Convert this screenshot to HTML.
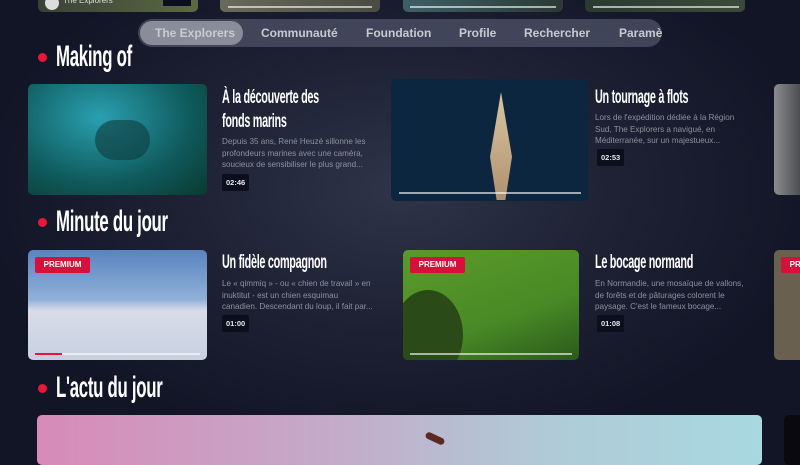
<!DOCTYPE html>
<html><head><meta charset="utf-8"><style>
*{margin:0;padding:0;box-sizing:border-box}
body{width:800px;height:450px;overflow:hidden;position:relative;font-family:"Liberation Sans",sans-serif;
background:radial-gradient(ellipse 420px 260px at 400px 190px,#30344a 0%,#1e2234 50%,#111526 100%);}
.a{position:absolute}
.img{position:absolute;border-radius:5px;overflow:hidden}
.h{position:absolute;font-family:"Liberation Sans Narrow","Liberation Sans",sans-serif;font-weight:bold;color:#fff;letter-spacing:-0.5px}
.sec{font-size:30px;transform:scaleX(.56);transform-origin:left;white-space:nowrap}
.dot{position:absolute;width:9px;height:9px;border-radius:50%;background:#e8173a}
.t{font-size:19px;line-height:24px;transform:scaleX(.57);transform-origin:left;white-space:nowrap}
.d{position:absolute;font-size:8.1px;line-height:11.5px;color:#8e919c;white-space:nowrap}
.b{position:absolute;background:#0b0f1d;color:#e6e7ea;font-size:7.5px;font-weight:bold;padding:4px 4px;border-radius:2px}
.p{position:absolute;left:7px;top:7px;width:55px;height:16px;background:#d5103a;color:#fff;font-size:8px;font-weight:bold;text-align:center;line-height:16px;border-radius:2px}
.bar{position:absolute;height:2px;background:rgba(255,255,255,.6)}
.nav{left:138px;top:19px;width:524px;height:28px;border-radius:14px;background:rgba(72,76,96,.85);overflow:hidden}
.nav span{position:absolute;top:0;line-height:28px;font-size:12px;font-weight:bold;color:#c8cad1}
</style></head><body>
<div class="img" style="left:38px;top:-20px;width:160px;height:32px;background:linear-gradient(90deg,#3a4038,#5a6a40)"></div>
<div class="a" style="left:45px;top:-4px;width:14px;height:14px;border-radius:50%;background:#ddd"></div>
<div class="a" style="left:63px;top:-4px;font-size:8px;color:#ddd">The Explorers</div>
<div class="a" style="left:163px;top:-6px;width:28px;height:12px;background:#0b0f1d"></div>
<div class="img" style="left:220px;top:-20px;width:160px;height:32px;background:linear-gradient(90deg,#6a6a5a,#4a4c42)"></div>
<div class="bar" style="left:228px;top:6px;width:144px"></div>
<div class="img" style="left:403px;top:-20px;width:160px;height:32px;background:linear-gradient(90deg,#3d6068,#2a3a34)"></div>
<div class="bar" style="left:410px;top:6px;width:146px"></div>
<div class="img" style="left:585px;top:-20px;width:160px;height:32px;background:linear-gradient(90deg,#2a3a30,#3b4a38)"></div>
<div class="bar" style="left:593px;top:6px;width:146px"></div>

<div class="a nav">
<div class="a" style="left:2px;top:2px;width:103px;height:24px;border-radius:12px;background:#8a8d99"></div>
<span style="left:17px;color:#c9cbd2">The Explorers</span>
<span style="left:123px">Communauté</span>
<span style="left:228px">Foundation</span>
<span style="left:321px">Profile</span>
<span style="left:386px">Rechercher</span>
<span style="left:481px">Paramètres</span>
</div>

<div class="dot" style="left:38px;top:53px"></div>
<div class="h sec" style="left:56px;top:40px">Making of</div>

<div class="img" style="left:28px;top:84px;width:179px;height:111px;background:radial-gradient(ellipse at 40% 30%,#2aa0b0,#0f5a5c 60%,#0a3a30)"></div>
<div class="a" style="left:95px;top:120px;width:55px;height:40px;border-radius:20px;background:#0d3a3c;opacity:.6"></div>
<div class="h t" style="left:222px;top:86px">À la découverte des<br>fonds marins</div>
<div class="d" style="left:222px;top:136px">Depuis 35 ans, René Heuzé sillonne les<br>profondeurs marines avec une caméra,<br>soucieux de sensibiliser le plus grand...</div>
<div class="b" style="left:222px;top:174px">02:46</div>

<div class="img" style="left:391px;top:79px;width:197px;height:122px;background:#0d2640"></div>
<div class="a" style="left:490px;top:92px;width:22px;height:108px;background:linear-gradient(180deg,#d8c8a0,#b09070);clip-path:polygon(50% 0,100% 60%,70% 100%,30% 100%,0 60%)"></div>
<div class="bar" style="left:399px;top:192px;width:182px"></div>
<div class="h t" style="left:595px;top:86px">Un tournage à flots</div>
<div class="d" style="left:595px;top:112px">Lors de l'expédition dédiée à la Région<br>Sud, The Explorers a navigué, en<br>Méditerranée, sur un majestueux...</div>
<div class="b" style="left:597px;top:149px">02:53</div>

<div class="img" style="left:774px;top:84px;width:40px;height:111px;background:linear-gradient(90deg,#8a8c90,#2a2c30)"></div>

<div class="dot" style="left:38px;top:218px"></div>
<div class="h sec" style="left:56px;top:205px">Minute du jour</div>

<div class="img" style="left:28px;top:250px;width:179px;height:110px;background:linear-gradient(180deg,#5a84c0 0%,#8fb0d8 45%,#d8dde8 55%,#c8d0e0 100%)">
<div class="p">PREMIUM</div>
<div class="bar" style="left:7px;top:103px;width:165px"></div>
<div class="a" style="left:7px;top:103px;width:27px;height:2px;background:#e8173a"></div>
</div>
<div class="h t" style="left:222px;top:251px">Un fidèle compagnon</div>
<div class="d" style="left:222px;top:278px">Le « qimmiq » - ou « chien de travail » en<br>inuktitut - est un chien esquimau<br>canadien. Descendant du loup, il fait par...</div>
<div class="b" style="left:222px;top:315px">01:00</div>

<div class="img" style="left:403px;top:250px;width:176px;height:110px;background:linear-gradient(160deg,#5a9a2a,#4a8a26 60%,#2a5a1a)">
<div class="a" style="left:-10px;top:40px;width:70px;height:90px;border-radius:50%;background:#2a4a18"></div>
<div class="p">PREMIUM</div>
<div class="bar" style="left:7px;top:103px;width:162px"></div>
</div>
<div class="h t" style="left:595px;top:251px">Le bocage normand</div>
<div class="d" style="left:595px;top:278px">En Normandie, une mosaïque de vallons,<br>de forêts et de pâturages colorent le<br>paysage. C'est le fameux bocage...</div>
<div class="b" style="left:597px;top:315px">01:08</div>

<div class="img" style="left:774px;top:250px;width:40px;height:110px;background:#6a6050"><div class="p">PREMIUM</div></div>

<div class="dot" style="left:38px;top:384px"></div>
<div class="h sec" style="left:56px;top:371px">L'actu du jour</div>
<div class="img" style="left:37px;top:415px;width:725px;height:50px;background:linear-gradient(90deg,#d88ab8,#c4aac8 40%,#b0cad8 70%,#a8d8e0)"></div>
<div class="a" style="left:425px;top:435px;width:20px;height:7px;background:#5a2a20;border-radius:4px;transform:rotate(25deg)"></div>
<div class="img" style="left:784px;top:415px;width:30px;height:50px;background:#0a0a0e"></div>
</body></html>
